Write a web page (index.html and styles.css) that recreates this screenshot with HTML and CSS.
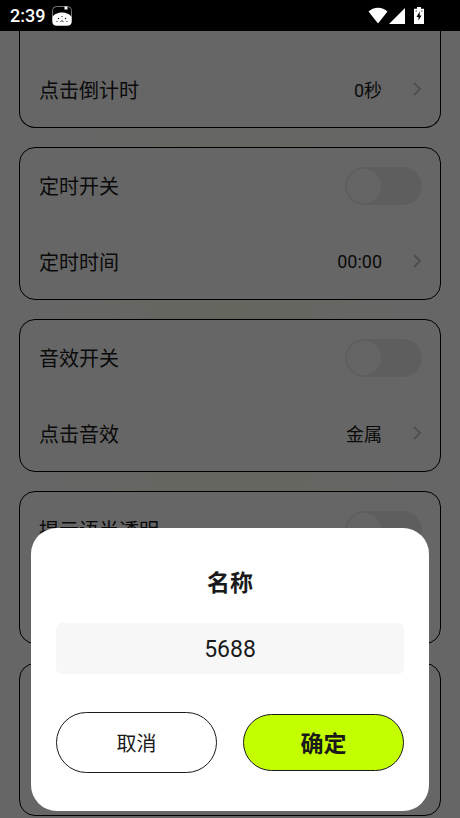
FILE: index.html
```html
<!DOCTYPE html>
<html lang="zh-CN">
<head>
<meta charset="utf-8">
<meta name="viewport" content="width=device-width, initial-scale=1">
<title>名称</title>
<link rel="stylesheet" href="styles.css">
</head>
<body>
<header class="status">
  <span class="status-time">2:39</span>
  <svg class="status-app" viewBox="0 0 20 20" width="20" height="20" aria-hidden="true">
    <rect x=".5" y=".5" width="19" height="19" rx="4" fill="#000" stroke="#777" stroke-width="1"/>
    <path d="M.500 11C2 8 6 6.500 10 6.500s8 1.500 9.500 4.500v4.500q0 4-4 4h-11q-4 0-4-4z" fill="#fff"/>
    <path d="M12.500.500h3v3h-3z" fill="#fff"/>
    <g fill="#000"><circle cx="6.500" cy="12.500" r=".7"/><circle cx="10" cy="10.500" r=".6"/><circle cx="13.500" cy="12.500" r=".7"/><circle cx="5" cy="15.500" r=".6"/><circle cx="15" cy="15.500" r=".6"/></g>
    <path d="M8.500 15.500q1.500-1.500 3 0" fill="none" stroke="#000" stroke-width=".8"/>
  </svg>
  <span class="status-icons">
    <svg viewBox="0 0 20 17" width="20" height="17" aria-hidden="true"><path d="M10 16.500.500 4.500C3 2 6.300.700 10 .700s7 1.300 9.500 3.800z" fill="#fff"/></svg>
    <svg viewBox="0 0 16 16" width="16" height="16" aria-hidden="true"><path d="M16 0v16H0z" fill="#fff"/></svg>
    <svg class="status-battery" viewBox="0 0 10 17" width="10" height="17" aria-hidden="true"><path d="M3 0h4v1.700h3V17H0V1.700h3z" fill="#fff"/><path d="M5.700 4.500 2.500 10h2v3.500L7.500 8.500H5.700z" fill="#000"/><path d="M1.500 4h1.500M7 4h1.500" stroke="#000" stroke-width=".7"/></svg>
  </span>
</header>

<main class="settings">
  <section class="card card-continued">
    <div class="row"><span class="label">点击倒计时</span><span class="value">0秒</span><svg class="chevron" viewBox="0 0 10 14" width="10" height="14" aria-hidden="true"><path d="m2 1 6 6-6 6"/></svg></div>
  </section>
  <section class="card">
    <div class="row"><label class="label" for="timer">定时开关</label><input class="switch" id="timer" type="checkbox" role="switch"></div>
    <div class="row"><span class="label">定时时间</span><span class="value">00:00</span><svg class="chevron" viewBox="0 0 10 14" width="10" height="14" aria-hidden="true"><path d="m2 1 6 6-6 6"/></svg></div>
  </section>
  <section class="card">
    <div class="row"><label class="label" for="sound">音效开关</label><input class="switch" id="sound" type="checkbox" role="switch"></div>
    <div class="row"><span class="label">点击音效</span><span class="value">金属</span><svg class="chevron" viewBox="0 0 10 14" width="10" height="14" aria-hidden="true"><path d="m2 1 6 6-6 6"/></svg></div>
  </section>
  <section class="card">
    <div class="row"><label class="label" for="hint">提示语半透明</label><input class="switch" id="hint" type="checkbox" role="switch"></div>
    <div class="row"></div>
  </section>
  <section class="card">
    <div class="row"></div>
    <div class="row"></div>
  </section>
</main>

<div class="backdrop">
  <form class="dialog" role="dialog" aria-labelledby="dialog-title">
    <h1 class="dialog-title" id="dialog-title">名称</h1>
    <input class="name-input" type="text" value="5688" aria-labelledby="dialog-title">
    <div class="actions">
      <button class="button" type="button">取消</button>
      <button class="button button-primary" type="button">确定</button>
    </div>
  </form>
</div>
</body>
</html>
```
FILE: styles.css
```css
* {
  box-sizing: border-box;
}

body {
  margin: 0;
  height: 100vh;
  display: flex;
  flex-direction: column;
  overflow: hidden;
  background: #fff;
  color: #1a1a1a;
  font-family: Roboto, "Noto Sans CJK SC", sans-serif;
}

.status {
  flex: none;
  height: 31px;
  padding: 0 36px 0 10px;
  display: flex;
  align-items: center;
  gap: 7px;
  background: #000;
  color: #fff;
}

.status-time {
  font-size: 18px;
  font-weight: 500;
}

.status-icons {
  margin-left: auto;
  display: flex;
  align-items: center;
  gap: 1px;
}

.status-battery {
  margin-left: 8px;
}

.settings {
  flex: 1;
  min-height: 0;
  overflow: hidden;
  padding: 0 19px;
  display: flex;
  flex-direction: column;
  gap: 19px;
  background: radial-gradient(ellipse 180px 440px at 50% 45%, #fcffe8, #fff);
}

.card {
  flex: none;
  border: 1px solid #000;
  border-radius: 16px;
  background: #fff;
}

.card-continued {
  border-top: 0;
  border-radius: 0 0 16px 16px;
  padding-top: 20px;
}

.row {
  height: 76px;
  padding: 0 18px 0 19px;
  display: flex;
  align-items: center;
}

.row:first-child:not(:last-child) {
  height: 75px;
}

.label {
  flex: 1;
  font-size: 20px;
}

.value {
  font-size: 18px;
}

.chevron {
  margin-left: 30px;
  fill: none;
  stroke: #c4c4c4;
  stroke-width: 2;
}

.switch {
  appearance: none;
  width: 77px;
  height: 38px;
  margin: 0;
  padding: 2px;
  border-radius: 19px;
  background: #ebebeb;
}

.switch::before {
  content: "";
  display: block;
  width: 34px;
  height: 34px;
  border-radius: 50%;
  background: #fdfdfd;
}

.switch:checked {
  background: #c4ff00;
}

.switch:checked::before {
  margin-left: auto;
}

.backdrop {
  position: fixed;
  inset: 31px 0 0;
  padding: 0 31px 7px;
  display: flex;
  align-items: flex-end;
  background: rgba(0, 0, 0, 0.6);
}

.dialog {
  flex: 1;
  min-width: 0;
  padding: 38px 25px;
  border-radius: 26px;
  background: #fff;
}

.dialog-title {
  margin: 0 0 21px;
  font-size: 23px;
  line-height: 36px;
  font-weight: 700;
  text-align: center;
}

.name-input {
  display: block;
  width: 100%;
  height: 51px;
  margin: 0 0 38px;
  padding: 2px 12px 0;
  border: 0;
  border-radius: 6px;
  background: #f7f7f7;
  color: inherit;
  font: inherit;
  font-size: 23px;
  text-align: center;
}

.actions {
  display: flex;
  align-items: center;
  gap: 26px;
}

.button {
  flex: 1;
  height: 61px;
  padding: 0;
  border: 1px solid #1a1a1a;
  border-radius: 31px;
  background: #fff;
  color: inherit;
  font: inherit;
  font-size: 20px;
}

.button-primary {
  height: 57px;
  padding-bottom: 2px;
  background: #c4ff00;
  font-size: 23px;
  font-weight: 700;
}
```
